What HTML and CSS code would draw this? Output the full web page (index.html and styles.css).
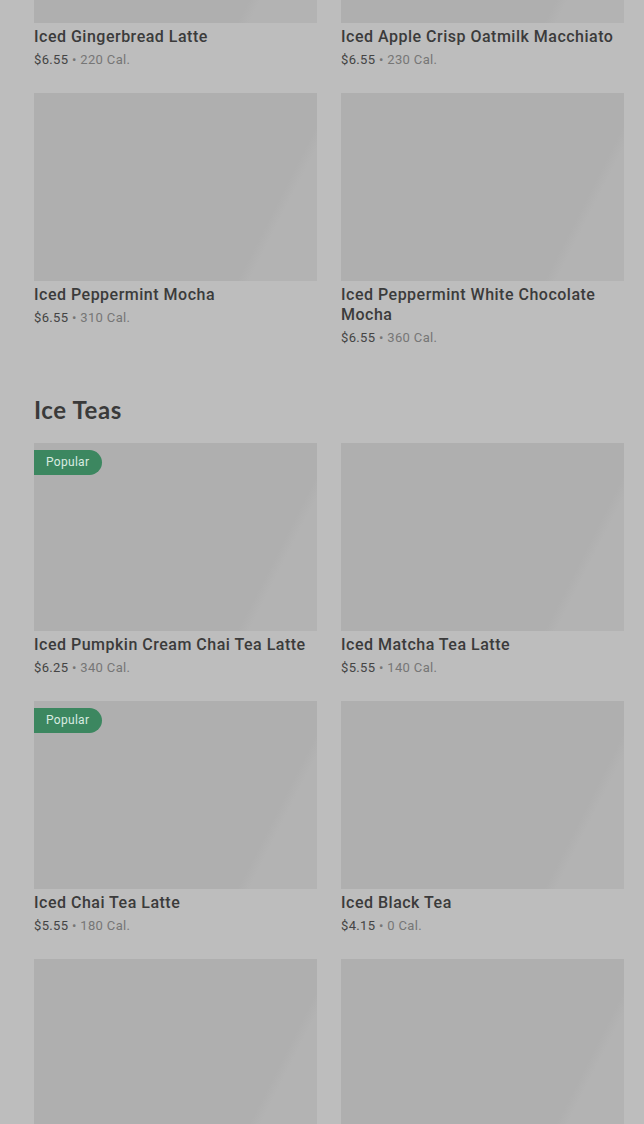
FILE: index.html
```html
<!DOCTYPE html>
<html lang="en">
<head>
    <meta charset="UTF-8">
    <meta name="viewport" content="width=device-width, initial-scale=1.0">
    <title>Menu - Iced Drinks</title>
    <link rel="stylesheet" href="styles.css">
</head>
<body>
    <main class="menu">
        <section class="menu-section">
            <div class="product-grid">
                <div class="product">
                    <div class="product-image"></div>
                    <h3 class="product-name">Iced Gingerbread Latte</h3>
                    <p class="product-meta"><span class="price">$6.55</span> • 220 Cal.</p>
                </div>
                <div class="product">
                    <div class="product-image"></div>
                    <h3 class="product-name">Iced Apple Crisp Oatmilk Macchiato</h3>
                    <p class="product-meta"><span class="price">$6.55</span> • 230 Cal.</p>
                </div>
                <div class="product">
                    <div class="product-image"></div>
                    <h3 class="product-name">Iced Peppermint Mocha</h3>
                    <p class="product-meta"><span class="price">$6.55</span> • 310 Cal.</p>
                </div>
                <div class="product">
                    <div class="product-image"></div>
                    <h3 class="product-name">Iced Peppermint White Chocolate Mocha</h3>
                    <p class="product-meta"><span class="price">$6.55</span> • 360 Cal.</p>
                </div>
            </div>
        </section>

        <section class="menu-section">
            <h2 class="section-title">Ice Teas</h2>
            <div class="product-grid">
                <div class="product">
                    <div class="product-image">
                        <span class="badge">Popular</span>
                    </div>
                    <h3 class="product-name">Iced Pumpkin Cream Chai Tea Latte</h3>
                    <p class="product-meta"><span class="price">$6.25</span> • 340 Cal.</p>
                </div>
                <div class="product">
                    <div class="product-image"></div>
                    <h3 class="product-name">Iced Matcha Tea Latte</h3>
                    <p class="product-meta"><span class="price">$5.55</span> • 140 Cal.</p>
                </div>
                <div class="product">
                    <div class="product-image">
                        <span class="badge">Popular</span>
                    </div>
                    <h3 class="product-name">Iced Chai Tea Latte</h3>
                    <p class="product-meta"><span class="price">$5.55</span> • 180 Cal.</p>
                </div>
                <div class="product">
                    <div class="product-image"></div>
                    <h3 class="product-name">Iced Black Tea</h3>
                    <p class="product-meta"><span class="price">$4.15</span> • 0 Cal.</p>
                </div>
                <div class="product">
                    <div class="product-image"></div>
                </div>
                <div class="product">
                    <div class="product-image"></div>
                </div>
            </div>
        </section>
    </main>
</body>
</html>
```

FILE: styles.css
```css
body {
    margin: 0;
    background: #bdbdbd;
    font-family: Roboto, 'Liberation Sans', sans-serif;
    color: #3b3b3b;
    overflow: hidden;
    height: 1124px;
}

/* page is scrolled part way into the menu */
.menu {
    margin-top: -165px;
    padding: 0 20px 40px 34px;
}

.menu-section + .menu-section {
    margin-top: 47px;
}

.section-title {
    font-family: Lato, 'Liberation Sans', sans-serif;
    font-size: 24px;
    font-weight: 700;
    line-height: 32px;
    letter-spacing: 0.6px;
    color: #3a3a3a;
    margin: 0 0 17px;
}

.product-grid {
    display: grid;
    grid-template-columns: 283px 283px;
    column-gap: 24px;
    row-gap: 24px;
}

.product-image {
    position: relative;
    height: 188px;
    background: linear-gradient(117deg, #afafaf 79%, #b3b3b3 82%);
}

.product-name {
    margin: 4px 0 0;
    font-size: 16px;
    font-weight: 500;
    line-height: 20px;
    letter-spacing: 0.5px;
    color: #3b3b3b;
}

.product-meta {
    margin: 4px 0 0;
    font-size: 13px;
    line-height: 18px;
    letter-spacing: 0.35px;
    color: #767676;
}

.price {
    color: #444;
}

.badge {
    position: absolute;
    top: 7px;
    left: 0;
    height: 25px;
    line-height: 25px;
    padding: 0 13px 0 12px;
    border-radius: 0 13px 13px 0;
    background: #3c8760;
    color: #d9ebe0;
    font-size: 12px;
    letter-spacing: 0.3px;
}
```
